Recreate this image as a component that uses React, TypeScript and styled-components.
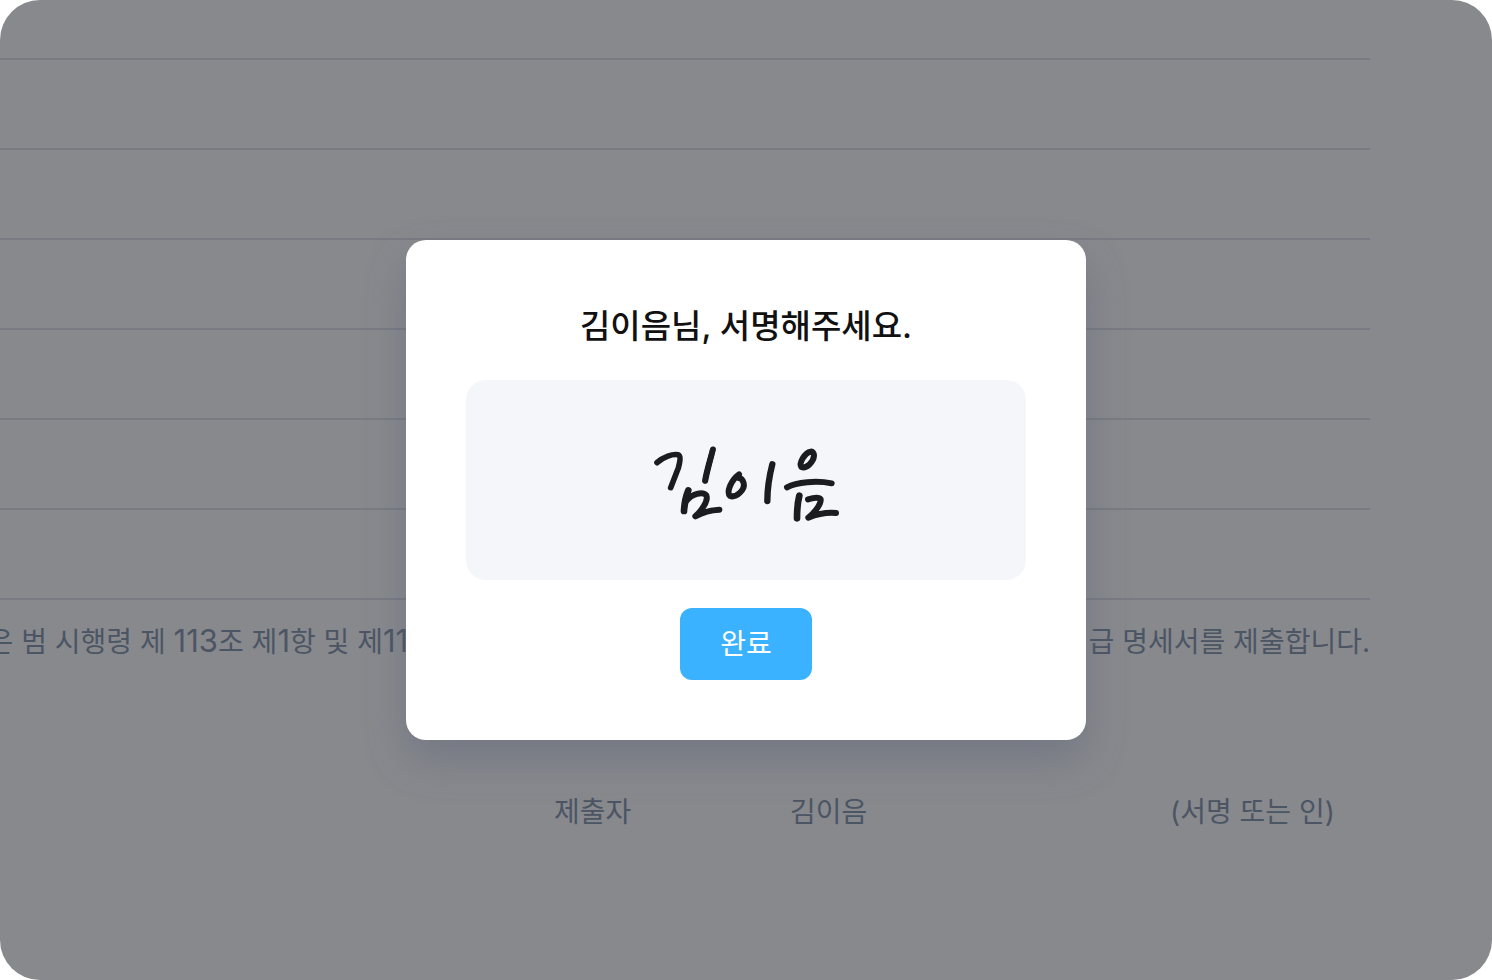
import React from "react";
import styled, { createGlobalStyle } from "styled-components";

const GlobalStyle = createGlobalStyle`
  *, *::before, *::after { box-sizing: border-box; }
  body {
    margin: 0;
    background: #ffffff;
    font-family: Inter, "Noto Sans CJK KR", sans-serif;
    -webkit-font-smoothing: antialiased;
  }
`;

const Screen = styled.div`
  display: grid;
  min-height: 100vh;
  border-radius: 40px;
  overflow: hidden;

  > * { grid-area: 1 / 1; min-width: 0; }
`;

const Sheet = styled.main`
  margin: 0 122px 0 -64px;
  color: #8797ad;
  font-size: 28px;
  line-height: 40px;
`;

const Rows = styled.ul`
  margin: 0;
  padding: 0;
  list-style: none;
`;

const Row = styled.li`
  height: 90px;
  border-bottom: 2px solid #e1e3e9;

  &:first-child { height: 60px; }
`;

const Statement = styled.p`
  display: flex;
  justify-content: space-between;
  height: 40px;
  margin: 22px 0 0;
  white-space: nowrap;
`;

const Numeral = styled.span`
  font-size: 31px;
  line-height: 1;
`;

const Submitter = styled.div`
  display: grid;
  grid-template-columns: 236px 380px 164px;
  justify-content: end;
  margin-top: 130px;
  padding-right: 36px;
  white-space: nowrap;
`;

const Overlay = styled.div`
  z-index: 1;
  display: flex;
  align-items: center;
  justify-content: center;
  background: rgba(17, 19, 27, 0.5);
`;

const Dialog = styled.section`
  display: flex;
  flex-direction: column;
  align-items: center;
  gap: 28px;
  width: 100%;
  max-width: 680px;
  padding: 60px;
  border-radius: 20px;
  background: #ffffff;
  box-shadow: 0 20px 40px rgba(88, 98, 120, 0.42);
`;

const Title = styled.h1`
  margin: 0;
  color: #111111;
  font-size: 33px;
  font-weight: 500;
  line-height: 52px;
`;

const SignaturePad = styled.div`
  display: flex;
  align-items: center;
  justify-content: center;
  width: 100%;
  height: 200px;
  border-radius: 20px;
  background: #f4f6fa;
`;

const Ink = styled.svg`
  display: block;
  width: 200px;
  height: 100px;
  fill: none;
  stroke: #1b1c20;
  stroke-linecap: round;
  stroke-linejoin: round;
`;

const DoneButton = styled.button`
  height: 72px;
  padding: 0 40px;
  border: 0;
  border-radius: 12px;
  background: #3bb2ff;
  color: #ffffff;
  font: 400 28px/40px Inter, "Noto Sans CJK KR", sans-serif;
  cursor: pointer;
`;

const rows = [1, 2, 3, 4, 5, 6, 7];

const strokes = [
  { width: 17, d: "M51 98C70 80 98 71 114 74C124 77 119 98 115 114L92 173" },
  { width: 17, d: "M219 58C213 84 202 120 196 153" },
  { width: 17, d: "M218 60C212 84 200 120 195 151" },
  { width: 20, d: "M145 181C138 198 133 220 132 243" },
  { width: 18, d: "M138 214C156 191 188 184 199 196C206 212 184 243 166 259C190 246 214 240 238 239" },
  { width: 18, d: "M297 133C274 150 258 186 270 198C288 204 316 180 311 159C308 149 302 144 296 144" },
  { width: 19, d: "M397 103C388 138 382 178 382 213" },
  { width: 18, d: "M512 65C494 68 476 100 484 111C499 117 521 96 522 77C521 68 518 64 512 65Z" },
  { width: 18, d: "M441 172C470 156 530 151 575 160" },
  { width: 20, d: "M478 197C472 220 471 244 471 265" },
  { width: 18, d: "M504 208C520 203 538 201 542 208C544 222 522 250 505 263C532 252 562 247 588 249" },
];

export default function App() {
  return (
    <>
      <GlobalStyle />
      <Screen>
        <Sheet>
          <Rows>
            {rows.map((row) => (
              <Row key={row} />
            ))}
          </Rows>
          <Statement>
            <span>
              본인은 범 시행령 제 <Numeral>113</Numeral>조 제<Numeral>1</Numeral>항 및 제
              <Numeral>115</Numeral>조
            </span>
            <span>지급 명세서를 제출합니다.</span>
          </Statement>
          <Submitter>
            <span>제출자</span>
            <span>김이음</span>
            <span>(서명 또는 인)</span>
          </Submitter>
        </Sheet>
        <Overlay>
          <Dialog role="dialog" aria-modal="true" aria-labelledby="sign-title">
            <Title id="sign-title">김이음님, 서명해주세요.</Title>
            <SignaturePad>
              <Ink viewBox="18 0 600 300" role="img" aria-label="김이음">
                {strokes.map(({ width, d }) => (
                  <path key={d} d={d} strokeWidth={width} />
                ))}
              </Ink>
            </SignaturePad>
            <DoneButton type="button">완료</DoneButton>
          </Dialog>
        </Overlay>
      </Screen>
    </>
  );
}
